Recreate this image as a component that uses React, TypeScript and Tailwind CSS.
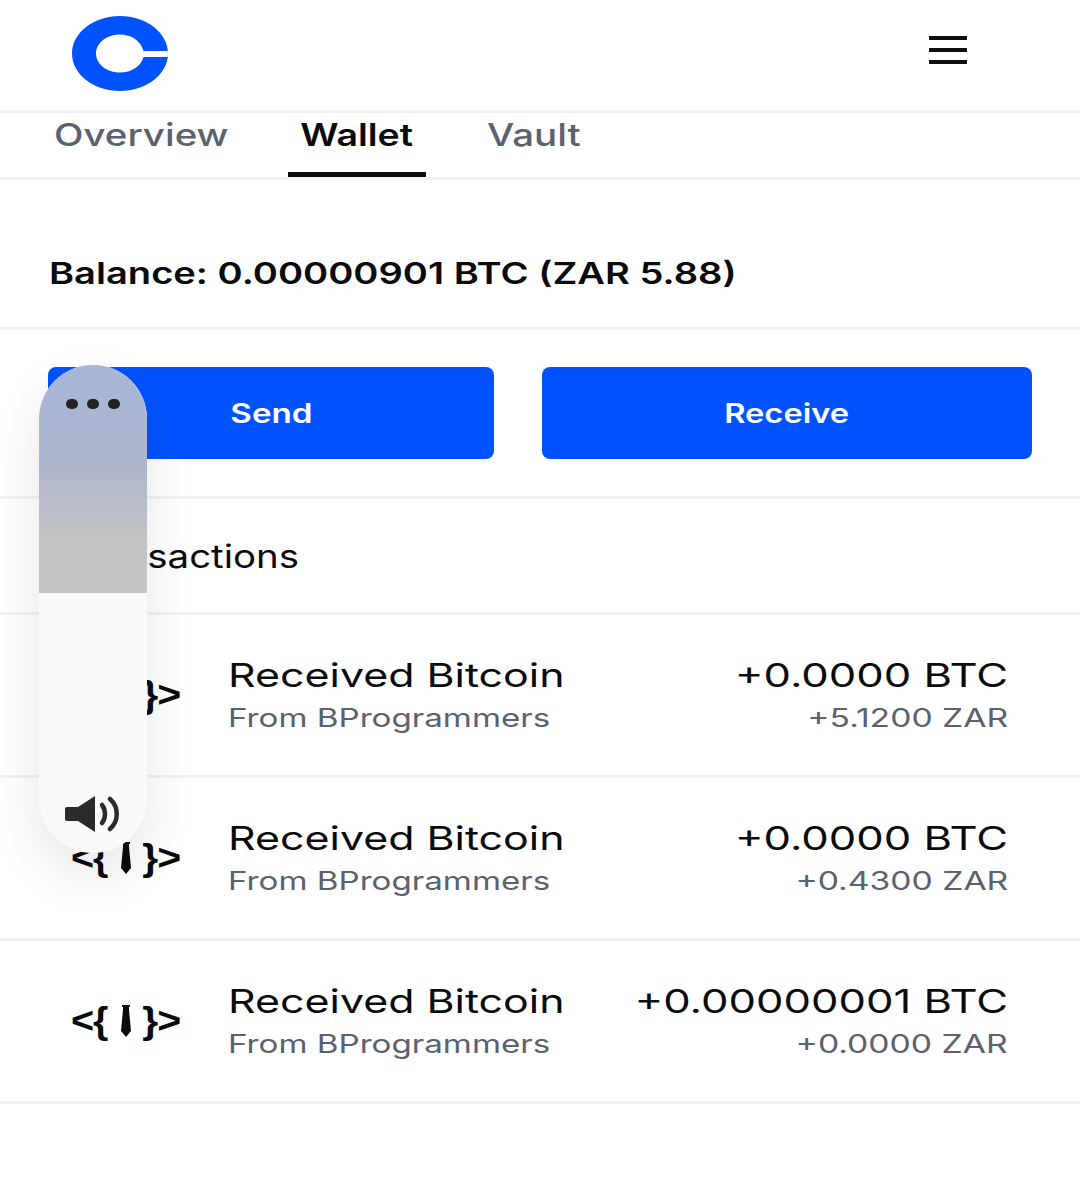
const rows = [
  { btc: "+0.0000 BTC", zar: "+5.1200 ZAR" },
  { btc: "+0.0000 BTC", zar: "+0.4300 ZAR" },
  { btc: "+0.00000001 BTC", zar: "+0.0000 ZAR" },
];

function Wide({ children, right, center, className = "" }: { children: React.ReactNode; right?: boolean; center?: boolean; className?: string }) {
  const origin = right ? "origin-right" : center ? "origin-center" : "origin-left";
  return <span className={`inline-block whitespace-nowrap ${origin} ${className}`}>{children}</span>;
}

function Logo() {
  return (
    <svg width="96" height="75" viewBox="0 0 96 75">
      <path
        fillRule="evenodd"
        fill="#0052ff"
        d="M48 0C74.5 0 96 16.8 96 37.5S74.5 75 48 75 0 58.2 0 37.5 21.5 0 48 0ZM48 18.5C34.7 18.5 24 27 24 37.5S34.7 56.5 48 56.5C59.5 56.5 69 50.4 71.500 41H96V35H71.500C69 25 59.500 18.500 48 18.500Z"
      />
    </svg>
  );
}

function Tie() {
  return (
    <svg width="10" height="32" viewBox="0 0 10 32" fill="#0a0b0d">
      <path d="M1 0H9V2H8L8 5L10 26L5 32L0 26L2 5V2H1Z" />
    </svg>
  );
}

function DevIcon() {
  return (
    <div className="flex w-[109px] items-center justify-between font-['Liberation_Sans',sans-serif] text-[36px] leading-none font-bold text-[#0a0b0d]">
      <span className="inline-block origin-left scale-x-[1.1] tracking-[-1px]">{"<{"}</span>
      <Tie />
      <span className="inline-block origin-right scale-x-[1.14] tracking-[-1px]">{"}>"}</span>
    </div>
  );
}

function Speaker() {
  return (
    <svg width="56" height="36" viewBox="0 0 56 36" fill="none">
      <path d="M2 11H13L30 0V36L13 25H2C0.900 25 0 24 0 23V13C0 12 0.900 11 2 11Z" fill="#2b2b2b" />
      <path d="M37 9C41 14 41 22 37 27" stroke="#2b2b2b" strokeWidth="4.500" strokeLinecap="round" />
      <path d="M45 3C54 11 54 25 45 33" stroke="#2b2b2b" strokeWidth="4.500" strokeLinecap="round" />
    </svg>
  );
}

export default function App() {
  return (
    <div className="relative h-[1200px] w-[1080px] overflow-hidden bg-white font-['Inter',sans-serif] text-[#0a0b0d]">
      {/* top bar */}
      <div className="flex h-[113px] items-start justify-between border-b-[3px] border-[#f1f2f4] pt-4 pr-[113px] pl-[72px]">
        <Logo />
        <div className="mt-5 flex w-[38px] flex-col gap-2">
          <div className="h-1 bg-[#111]" />
          <div className="h-1 bg-[#111]" />
          <div className="h-1 bg-[#111]" />
        </div>
      </div>

      {/* tabs */}
      <div className="flex h-[67px] border-b-[3px] border-[#f1f2f4] text-[31px] leading-none font-medium text-[#5b616e]">
        <div className="ml-[54px] w-[234px] pt-[6px]">
          <Wide className="scale-x-[1.24]">Overview</Wide>
        </div>
        <div className="flex h-[64px] w-[138px] justify-center border-b-[5px] border-[#0a0b0d] pt-[6px] font-semibold text-[#0a0b0d]">
          <Wide center className="scale-x-[1.21]">Wallet</Wide>
        </div>
        <div className="ml-[61px] pt-[6px]">
          <Wide className="scale-x-[1.24]">Vault</Wide>
        </div>
      </div>

      {/* balance */}
      <div className="flex h-[150px] items-end border-b-[3px] border-[#f1f2f4] pb-[39px] pl-[49px] text-[30px] leading-none font-semibold">
        <Wide className="scale-x-[1.27]">Balance: 0.00000901 BTC (ZAR 5.88)</Wide>
      </div>

      {/* actions */}
      <div className="flex h-[169px] gap-12 border-b-[3px] border-[#f1f2f4] pt-[37px] pl-12 text-[27px] font-semibold text-white">
        <button className="flex h-[92px] w-[446px] items-center justify-center rounded-lg bg-[#0052ff] pt-[2px]">
          <Wide center className="scale-x-[1.23]">Send</Wide>
        </button>
        <button className="flex h-[92px] w-[490px] items-center justify-center rounded-lg bg-[#0052ff] pt-[2px]">
          <Wide center className="scale-x-[1.21]">Receive</Wide>
        </button>
      </div>

      <div className="flex h-[116px] items-center border-b-[3px] border-[#f1f2f4] pt-[2px] pl-[66px] text-[32px] leading-none">
        <Wide className="scale-x-[1.2]">Transactions</Wide>
      </div>

      {rows.map((row, i) => (
        <div key={i} className="flex h-[163px] items-center border-b-[3px] border-[#f1f2f4] pr-[72px] pl-[71px]">
          <DevIcon />
          <div className="ml-[48px] flex flex-col gap-[13px] leading-none">
            <Wide className="scale-x-[1.3] text-[33px]">Received Bitcoin</Wide>
            <Wide className="scale-x-[1.3] text-[25.5px] text-[#5b616e]">From BProgrammers</Wide>
          </div>
          <div className="ml-auto flex flex-col items-end gap-[13px] leading-none">
            <Wide right className="scale-x-[1.32] text-[33px]">{row.btc}</Wide>
            <Wide right className="scale-x-[1.32] text-[25.5px] text-[#5b616e]">{row.zar}</Wide>
          </div>
        </div>
      ))}

      {/* floating volume panel */}
      <div className="absolute top-[365px] left-[39px] flex h-[488px] w-[108px] flex-col overflow-hidden rounded-[54px] bg-[#fafafa] shadow-[0_20px_50px_rgba(0,0,0,0.1)]">
        <div className="flex h-[228px] justify-center gap-[9px] bg-gradient-to-b from-[#a9b6d6] from-15% via-[#afb7cd] via-45% to-[#c4c4c4] to-80% pt-[34px]">
          <div className="h-[10px] w-3 rounded-full bg-[#222]" />
          <div className="h-[10px] w-3 rounded-full bg-[#222]" />
          <div className="h-[10px] w-3 rounded-full bg-[#222]" />
        </div>
        <div className="mt-auto mb-[21px] flex justify-center">
          <Speaker />
        </div>
      </div>
    </div>
  );
}
